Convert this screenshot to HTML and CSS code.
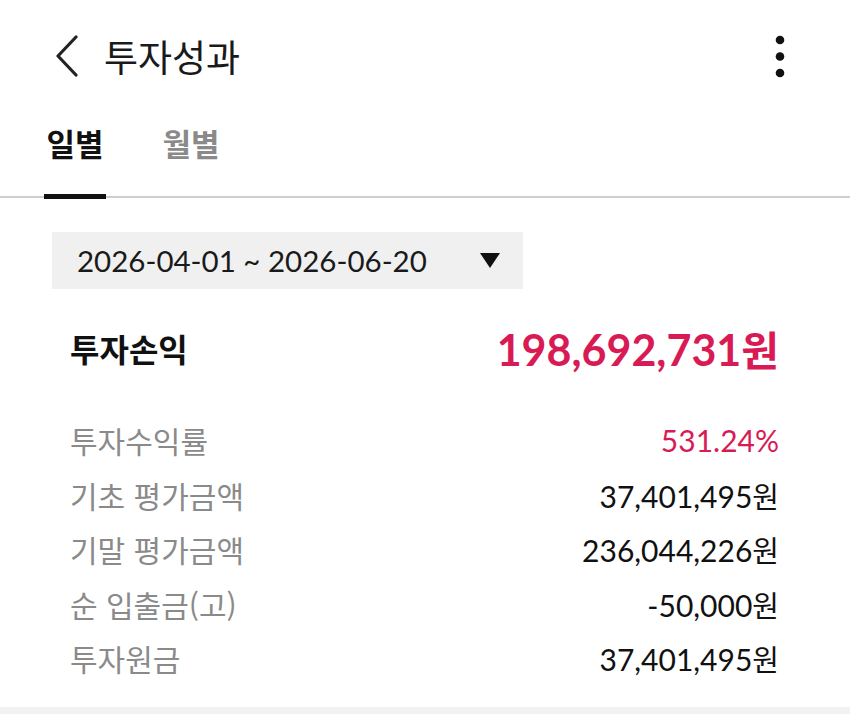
FILE: index.html
```html
<!DOCTYPE html>
<html lang="ko">
<head>
    <meta charset="UTF-8">
    <meta name="viewport" content="width=device-width, initial-scale=1.0">
    <title>투자성과</title>
    <link rel="stylesheet" href="styles.css">
</head>
<body>
    <div class="header">
        <svg class="back" width="26" height="42" viewBox="0 0 26 42">
            <path d="M22 2 L4 21 L22 40" fill="none" stroke="#222" stroke-width="3.2" stroke-linecap="round" stroke-linejoin="round"/>
        </svg>
        <div class="title">투자성과</div>
        <svg class="more" width="12" height="44" viewBox="0 0 12 44">
            <circle cx="6" cy="6" r="4.3" fill="#111"/>
            <circle cx="6" cy="22.5" r="4.3" fill="#111"/>
            <circle cx="6" cy="39" r="4.3" fill="#111"/>
        </svg>
    </div>
    <div class="tabs">
        <div class="tab active">일별</div>
        <div class="tab">월별</div>
    </div>
    <div class="content">
        <div class="period">
            <span class="period-text">2026-04-01 ~ 2026-06-20</span>
            <span class="caret"></span>
        </div>
        <div class="total">
            <span class="total-label">투자손익</span>
            <span class="total-value">198,692,731<span class="won">원</span></span>
        </div>
        <div class="rows">
            <div class="row">
                <span class="label">투자수익률</span>
                <span class="value red">531.24%</span>
            </div>
            <div class="row">
                <span class="label">기초 평가금액</span>
                <span class="value">37,401,495<span class="won">원</span></span>
            </div>
            <div class="row">
                <span class="label">기말 평가금액</span>
                <span class="value">236,044,226<span class="won">원</span></span>
            </div>
            <div class="row">
                <span class="label">순 입출금(고)</span>
                <span class="value">-50,000<span class="won">원</span></span>
            </div>
            <div class="row">
                <span class="label">투자원금</span>
                <span class="value">37,401,495<span class="won">원</span></span>
            </div>
        </div>
    </div>
    <div class="bottom"></div>
</body>
</html>
```

FILE: styles.css
```css
body {
    margin: 0;
    width: 850px;
    height: 714px;
    overflow: hidden;
    background-color: #ffffff;
    font-family: "Noto Sans CJK KR", sans-serif;
    color: #111;
    display: flex;
    flex-direction: column;
}
.header {
    height: 112px;
    display: flex;
    align-items: center;
    padding: 0 64px 0 54px;
    box-sizing: border-box;
}
.title {
    font-size: 37px;
    margin-left: 24px;
    flex: 1;
    color: #1a1a1a;
}
.tabs {
    display: flex;
    height: 86px;
    padding-left: 44px;
    border-bottom: 2px solid #cfcfcf;
    box-sizing: border-box;
}
.tab {
    font-size: 31px;
    font-weight: bold;
    color: #8a8a8a;
    width: 62px;
    text-align: center;
    margin-right: 54px;
    padding-top: 8px;
    box-sizing: border-box;
    position: relative;
}
.tab.active {
    color: #111;
}
.tab.active::after {
    content: "";
    position: absolute;
    left: 0;
    right: 0;
    bottom: -3px;
    height: 5px;
    background-color: #111;
}
.content {
    flex: 1;
    padding: 34px 71px 0 52px;
}
.period {
    width: 471px;
    height: 57px;
    background-color: #f0f0f0;
    display: flex;
    align-items: center;
    justify-content: space-between;
    padding: 0 23px 0 25px;
    box-sizing: border-box;
    font-family: Lato, sans-serif;
    font-size: 29.5px;
    color: #1a1a1a;
}
.caret {
    width: 0;
    height: 0;
    border-left: 10px solid transparent;
    border-right: 10px solid transparent;
    border-top: 15px solid #111;
}
.total {
    display: flex;
    justify-content: space-between;
    align-items: center;
    margin: 34px 0 0 18px;
    height: 50px;
}
.total-label {
    font-size: 32px;
    font-weight: bold;
}
.total-value {
    font-family: Lato, sans-serif;
    font-size: 43px;
    font-weight: bold;
    color: #d81b55;
}
.total-value .won {
    font-family: "Noto Sans CJK KR", sans-serif;
    font-size: 41px;
}
.rows {
    margin: 40px 0 0 18px;
    display: flex;
    flex-direction: column;
}
.row {
    display: flex;
    justify-content: space-between;
    align-items: center;
    height: 54.5px;
}
.label {
    font-size: 30px;
    color: #8a8a8a;
}
.value {
    font-family: Lato, sans-serif;
    font-size: 30px;
    color: #111;
}
.value .won {
    font-family: "Noto Sans CJK KR", sans-serif;
    font-size: 29px;
}
.value.red {
    color: #d81b55;
}
.bottom {
    height: 7px;
    background-color: #f2f2f2;
}
```
